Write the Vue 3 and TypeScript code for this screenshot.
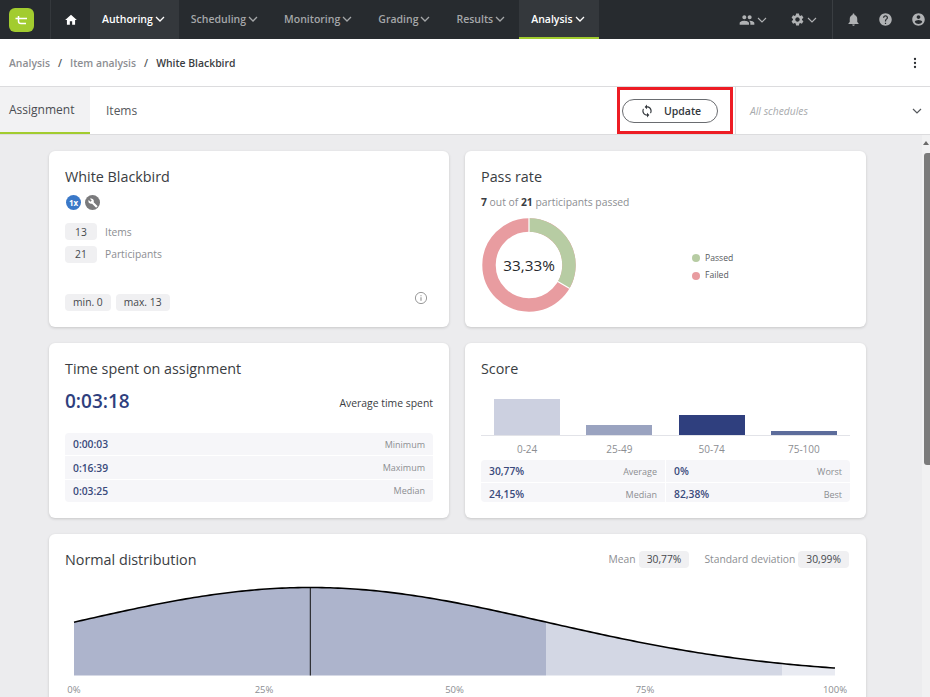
<template>
  <div class="page">
    <header class="topbar">
      <div class="logo-cell">
        <svg class="logo" width="25" height="24" viewBox="0 0 25 24">
          <rect width="25" height="24" rx="6" fill="#a2cc2f" />
          <path d="M9.5 8v5.2c0 1.6 1 2.3 2.5 2.3h5M6.5 10.5H18" fill="none" stroke="#fff" stroke-width="1.5" />
        </svg>
      </div>
      <a class="home-cell">
        <svg width="14" height="14" viewBox="0 0 24 24"><path fill="#fff" :d="icons.home" /></svg>
      </a>
      <a
        v-for="item in navItems"
        :key="item.label"
        class="nav-item"
        :class="{ 'nav-item--open': item.open, 'nav-item--active': item.active }"
      >
        {{ item.label }}
        <svg class="chev" width="10" height="6" viewBox="0 0 10 6"><path d="M1 1l4 4 4-4" fill="none" stroke="currentColor" stroke-width="1.3" /></svg>
      </a>
      <div class="nav-tools">
        <a class="tool">
          <svg width="16" height="16" viewBox="0 0 24 24"><path fill="currentColor" :d="icons.people" /></svg>
          <svg class="chev" width="10" height="6" viewBox="0 0 10 6"><path d="M1 1l4 4 4-4" fill="none" stroke="currentColor" stroke-width="1.1" /></svg>
        </a>
        <a class="tool tool--last">
          <svg width="15" height="15" viewBox="0 0 24 24"><path fill="currentColor" :d="icons.gear" /></svg>
          <svg class="chev" width="10" height="6" viewBox="0 0 10 6"><path d="M1 1l4 4 4-4" fill="none" stroke="currentColor" stroke-width="1.1" /></svg>
        </a>
        <div class="user-tools">
          <svg width="15" height="15" viewBox="0 0 24 24"><path fill="currentColor" :d="icons.bell" /></svg>
          <svg width="15" height="15" viewBox="0 0 24 24"><path fill="currentColor" :d="icons.help" /></svg>
          <svg width="15" height="15" viewBox="0 0 24 24"><path fill="currentColor" :d="icons.account" /></svg>
        </div>
      </div>
    </header>

    <div class="crumbs">
      <span class="crumb">Analysis</span>
      <span class="sep">/</span>
      <span class="crumb">Item analysis</span>
      <span class="sep">/</span>
      <span class="crumb crumb--current">White Blackbird</span>
      <svg class="more" width="4" height="12" viewBox="0 0 4 12">
        <circle cx="2" cy="2" r="1.15" /><circle cx="2" cy="6" r="1.15" /><circle cx="2" cy="10" r="1.15" />
      </svg>
    </div>

    <div class="tabs">
      <a class="tab tab--active">Assignment</a>
      <a class="tab">Items</a>
      <div class="marked">
        <button class="update-btn">
          <svg width="14" height="14" viewBox="0 0 24 24"><path fill="#33373c" :d="icons.sync" /></svg>
          <span>Update</span>
        </button>
      </div>
      <div class="schedules">
        <span>All schedules</span>
        <svg width="10" height="6" viewBox="0 0 10 6"><path d="M1 1l4 4 4-4" fill="none" stroke="#55585c" stroke-width="1.2" /></svg>
      </div>
    </div>

    <div class="body">
      <main class="content">
        <div class="grid">
          <section class="card">
            <h2>White Blackbird</h2>
            <div class="badges">
              <span class="badge badge--blue">1x</span>
              <span class="badge badge--grey">
                <svg width="10" height="10" viewBox="0 0 24 24"><path fill="#fff" :d="icons.wrench" /></svg>
              </span>
            </div>
            <div class="count-row"><span class="pill pill--count">13</span><span class="muted">Items</span></div>
            <div class="count-row"><span class="pill pill--count">21</span><span class="muted">Participants</span></div>
            <div class="limits">
              <span class="pill">min. 0</span>
              <span class="pill">max. 13</span>
              <svg class="info" width="14" height="14" viewBox="0 0 14 14">
                <circle cx="7" cy="7" r="5.6" fill="none" stroke="#9a9a9a" stroke-width="1" />
                <path d="M7 6.3v3.4M7 4.2v1.1" stroke="#9a9a9a" stroke-width="1.2" />
              </svg>
            </div>
          </section>

          <section class="card">
            <h2>Pass rate</h2>
            <p class="muted pass-line"><b>7</b> out of <b>21</b> participants passed</p>
            <div class="pass-body">
              <div class="donut">
                <svg width="94" height="94" viewBox="0 0 94 94">
                  <circle cx="47" cy="47" r="40" fill="none" stroke="#e89ca0" stroke-width="13.4" />
                  <path d="M47 7A40 40 0 0 1 81.64 67" fill="none" stroke="#b7cca3" stroke-width="13.4" />
                  <path d="M47 0V14M75.3 63.3L87.7 70.5" stroke="#fff" stroke-width="1.2" />
                </svg>
                <span class="donut-label">33,33%</span>
              </div>
              <ul class="legend">
                <li><i class="dot dot--green"></i>Passed</li>
                <li><i class="dot dot--red"></i>Failed</li>
              </ul>
            </div>
          </section>

          <section class="card">
            <h2>Time spent on assignment</h2>
            <div class="time-head">
              <span class="time-big">0:03:18</span>
              <span class="time-note">Average time spent</span>
            </div>
            <div class="stat-list">
              <div v-for="row in timeRows" :key="row.label" class="stat-row">
                <strong>{{ row.value }}</strong><span>{{ row.label }}</span>
              </div>
            </div>
          </section>

          <section class="card">
            <h2>Score</h2>
            <div class="bars">
              <div v-for="bar in scoreBars" :key="bar.label" class="bar-col">
                <div class="bar" :style="{ height: bar.height + 'px', background: bar.color }"></div>
              </div>
            </div>
            <div class="bar-labels">
              <span v-for="bar in scoreBars" :key="bar.label">{{ bar.label }}</span>
            </div>
            <div class="score-stats">
              <div v-for="row in scoreRows" :key="row.label" class="stat-row">
                <strong>{{ row.value }}</strong><span>{{ row.label }}</span>
              </div>
            </div>
          </section>

          <section class="card card--wide">
            <div class="dist-head">
              <h2>Normal distribution</h2>
              <div class="dist-meta">
                <span class="muted">Mean</span><span class="pill">30,77%</span>
                <span class="muted dist-gap">Standard deviation</span><span class="pill">30,99%</span>
              </div>
            </div>
            <svg class="curve" width="817" height="120" viewBox="49 580 817 120">
              <path :d="areaPath(74, 546)" fill="#adb4cc" />
              <path :d="areaPath(546, 782)" fill="#d3d7e4" />
              <path :d="areaPath(782, 835)" fill="#e9ebf2" />
              <path :d="linePath" fill="none" stroke="#000" stroke-width="1.6" />
              <path d="M310.3 588V675.5" stroke="#111" stroke-width="1" />
              <text v-for="tick in ticks" :key="tick.label" :x="tick.x" y="693" text-anchor="middle">{{ tick.label }}</text>
            </svg>
          </section>
        </div>
      </main>
      <div class="scrollbar">
        <svg width="8" height="6" viewBox="0 0 8 6"><path d="M4 1l3 4H1z" fill="#6a6a6a" /></svg>
        <div class="thumb"></div>
      </div>
    </div>
  </div>
</template>

<script setup lang="ts">
const icons = {
  home: 'M10 20v-6h4v6h5v-8h3L12 3 2 12h3v8z',
  people:
    'M16 11c1.66 0 2.99-1.34 2.99-3S17.66 5 16 5c-1.66 0-3 1.34-3 3s1.34 3 3 3zm-8 0c1.66 0 2.99-1.34 2.99-3S9.66 5 8 5C6.34 5 5 6.34 5 8s1.34 3 3 3zm0 2c-2.33 0-7 1.17-7 3.5V19h14v-2.5c0-2.33-4.67-3.5-7-3.5zm8 0c-.29 0-.62.02-.97.05 1.16.84 1.97 1.97 1.97 3.45V19h6v-2.5c0-2.33-4.67-3.5-7-3.5z',
  gear:
    'M19.14 12.94c.04-.3.06-.61.06-.94 0-.32-.02-.64-.07-.94l2.03-1.58c.18-.14.23-.41.12-.61l-1.92-3.32c-.12-.22-.37-.29-.59-.22l-2.39.96c-.5-.38-1.03-.7-1.62-.94l-.36-2.54c-.04-.24-.24-.41-.48-.41h-3.84c-.24 0-.43.17-.47.41l-.36 2.54c-.59.24-1.13.57-1.62.94l-2.39-.96c-.22-.08-.47 0-.59.22L2.74 8.87c-.12.21-.08.47.12.61l2.03 1.58c-.05.3-.09.63-.09.94s.02.64.07.94l-2.03 1.58c-.18.14-.23.41-.12.61l1.92 3.32c.12.22.37.29.59.22l2.39-.96c.5.38 1.03.7 1.62.94l.36 2.54c.05.24.24.41.48.41h3.84c.24 0 .44-.17.47-.41l.36-2.54c.59-.24 1.13-.56 1.62-.94l2.39.96c.22.08.47 0 .59-.22l1.92-3.32c.12-.22.07-.47-.12-.61l-2.01-1.58zM12 15.6c-1.98 0-3.6-1.62-3.6-3.6s1.62-3.6 3.6-3.6 3.6 1.62 3.6 3.6-1.62 3.6-3.6 3.6z',
  bell: 'M12 22c1.1 0 2-.9 2-2h-4c0 1.1.89 2 2 2zm6-6v-5c0-3.07-1.64-5.64-4.5-6.32V4c0-.83-.67-1.5-1.5-1.5s-1.5.67-1.5 1.5v.68C7.63 5.36 6 7.92 6 11v5l-2 2v1h16v-1l-2-2z',
  help: 'M12 2C6.48 2 2 6.48 2 12s4.48 10 10 10 10-4.48 10-10S17.52 2 12 2zm1 17h-2v-2h2v2zm2.07-7.75l-.9.92C13.45 12.9 13 13.5 13 15h-2v-.5c0-1.1.45-2.1 1.17-2.83l1.24-1.26c.37-.36.59-.86.59-1.41 0-1.1-.9-2-2-2s-2 .9-2 2H8c0-2.21 1.79-4 4-4s4 1.79 4 4c0 .88-.36 1.68-.93 2.25z',
  account:
    'M12 2C6.48 2 2 6.48 2 12s4.48 10 10 10 10-4.48 10-10S17.52 2 12 2zm0 3c1.66 0 3 1.34 3 3s-1.34 3-3 3-3-1.34-3-3 1.34-3 3-3zm0 14.2c-2.5 0-4.71-1.28-6-3.22.03-1.99 4-3.08 6-3.08 1.99 0 5.97 1.09 6 3.08-1.29 1.94-3.5 3.22-6 3.22z',
  sync: 'M12 4V1L8 5l4 4V6c3.31 0 6 2.69 6 6 0 1.01-.25 1.97-.7 2.8l1.46 1.46C19.54 15.03 20 13.57 20 12c0-4.42-3.58-8-8-8zm0 14c-3.31 0-6-2.69-6-6 0-1.01.25-1.97.7-2.8L5.24 7.74C4.46 8.97 4 10.43 4 12c0 4.42 3.58 8 8 8v3l4-4-4-4v3z',
  wrench:
    'M22.7 19l-9.1-9.1c.9-2.3.4-5-1.5-6.9-2-2-5-2.4-7.4-1.3L9 6 6 9 1.6 4.7C.4 7.1.9 10.1 2.9 12.1c1.9 1.9 4.6 2.4 6.9 1.5l9.1 9.1c.4.4 1 .4 1.4 0l2.3-2.3c.5-.4.5-1.1.1-1.4z',
}

const navItems = [
  { label: 'Authoring', open: true },
  { label: 'Scheduling' },
  { label: 'Monitoring' },
  { label: 'Grading' },
  { label: 'Results' },
  { label: 'Analysis', active: true },
]

const timeRows = [
  { value: '0:00:03', label: 'Minimum' },
  { value: '0:16:39', label: 'Maximum' },
  { value: '0:03:25', label: 'Median' },
]

const scoreBars = [
  { label: '0-24', height: 36, color: '#ccd0e0' },
  { label: '25-49', height: 10, color: '#9aa3c0' },
  { label: '50-74', height: 20, color: '#2f3f7e' },
  { label: '75-100', height: 4, color: '#5c6c9b' },
]

const scoreRows = [
  { value: '30,77%', label: 'Average' },
  { value: '0%', label: 'Worst' },
  { value: '24,15%', label: 'Median' },
  { value: '82,38%', label: 'Best' },
]

const ticks = [
  { label: '0%', x: 74 },
  { label: '25%', x: 264 },
  { label: '50%', x: 454.5 },
  { label: '75%', x: 645 },
  { label: '100%', x: 835 },
]

// gaussian over the plot, coordinates are page pixels (viewBox starts at 49,580)
const baseline = 675.5
const curveY = (x: number) => baseline - 88 * Math.exp(-((x - 310.3) ** 2) / (2 * 236 ** 2))

const curvePoints = (from: number, to: number) => {
  const points: string[] = []
  for (let x = from; x < to; x += 4) points.push(`${x} ${curveY(x).toFixed(2)}`)
  points.push(`${to} ${curveY(to).toFixed(2)}`)
  return points
}

const areaPath = (from: number, to: number) =>
  `M${from} ${baseline}L${curvePoints(from, to).join('L')}L${to} ${baseline}Z`

const linePath = `M${curvePoints(74, 835).join('L')}`
</script>

<style>
html,
body {
  margin: 0;
  overflow: hidden;
}
</style>

<style scoped>
.page {
  width: 930px;
  height: 697px;
  display: flex;
  flex-direction: column;
  overflow: hidden;
  font-family: 'Open Sans', 'Liberation Sans', sans-serif;
  color: #3a3d42;
  background: #fff;
}

.topbar {
  flex: 0 0 39px;
  display: flex;
  align-items: stretch;
  background: #272b2f;
  color: #a5a7a9;
  font-size: 10.5px;
  font-weight: 600;
}

.logo-cell {
  width: 51px;
  display: flex;
  align-items: center;
  padding-left: 9px;
  box-sizing: border-box;
  border-right: 1px solid #34383c;
}

.home-cell {
  width: 39px;
  display: flex;
  align-items: center;
  justify-content: center;
}

.nav-item {
  display: flex;
  align-items: center;
  gap: 2px;
  padding: 0 14px 0 12px;
  border-bottom: 2px solid transparent;
}

.nav-item--open {
  background: #34383c;
  color: #fff;
}

.nav-item--active {
  background: #34383c;
  color: #fff;
  border-bottom-color: #a2cc2f;
}

.nav-tools {
  margin-left: auto;
  display: flex;
  align-items: center;
  color: #b0b2b4;
}

.tool {
  display: flex;
  align-items: center;
  gap: 2px;
  margin-right: 23px;
}

.tool--last {
  margin-right: 0;
}

.user-tools {
  height: 100%;
  display: flex;
  align-items: center;
  gap: 17.5px;
  margin-left: 15px;
  padding: 0 4.5px 0 13px;
  border-left: 1px solid #3a3e42;
}

.crumbs {
  flex: 0 0 47px;
  display: flex;
  align-items: center;
  padding: 0 13px 0 9px;
  font-size: 10.4px;
  font-weight: 600;
  color: #8c8e92;
  border-bottom: 1px solid #dcdcde;
}

.sep {
  margin: 0 8px;
  color: #55585c;
}

.crumb--current {
  color: #3a3d42;
}

.more {
  margin-left: auto;
  fill: #2a2d31;
}

.tabs {
  flex: 0 0 47px;
  display: flex;
  align-items: stretch;
  font-size: 12px;
  border-bottom: 1px solid #dcdcde;
}

.tab {
  display: flex;
  align-items: center;
  padding: 0 16px;
  color: #55585c;
}

.tab--active {
  width: 90px;
  box-sizing: border-box;
  padding: 0 9px;
  background: #f2f2f3;
  color: #4a4d52;
  border-bottom: 2px solid #a2cc2f;
}

.marked {
  margin-left: auto;
  width: 116px;
  box-sizing: border-box;
  display: flex;
  align-items: center;
  padding-left: 2px;
  margin-right: 2px;
  border: 3px solid #ed1c24;
}

.update-btn {
  width: 96px;
  height: 24px;
  padding: 0 0 0 17px;
  display: flex;
  align-items: center;
  gap: 10px;
  background: #fff;
  border: 1px solid #6a6c70;
  border-radius: 12px;
  font-family: inherit;
  font-size: 10.5px;
  font-weight: 600;
  color: #33373c;
}

.schedules {
  width: 195px;
  box-sizing: border-box;
  display: flex;
  align-items: center;
  justify-content: space-between;
  padding: 0 8px 0 14px;
  border-left: 1px solid #dcdcde;
  font-size: 10.3px;
  font-style: italic;
  color: #a8aaad;
}

.body {
  flex: 1;
  min-height: 0;
  display: flex;
  background: #ececee;
}

.content {
  flex: 1;
  min-width: 0;
  overflow: hidden;
  padding: 16px 56px 0 49px;
}

.grid {
  display: grid;
  grid-template-columns: 400px 401px;
  grid-auto-rows: 175.5px;
  gap: 16px;
}

.card {
  box-sizing: border-box;
  padding: 16px;
  display: flex;
  flex-direction: column;
  background: #fff;
  border-radius: 6px;
  box-shadow: 0 1px 3px rgba(0, 0, 0, 0.16);
  min-width: 0;
}

.card--wide {
  grid-column: 1 / -1;
  height: 200px;
}

h2 {
  margin: 0;
  font-size: 14.35px;
  line-height: 20px;
  font-weight: 400;
  color: #3a3d42;
}

.muted {
  color: #8c8e92;
}

.pill {
  display: inline-flex;
  align-items: center;
  justify-content: center;
  height: 17px;
  padding: 0 8px;
  border-radius: 4px;
  background: #f0f0f2;
  font-size: 10.3px;
  color: #45484c;
}

.badges {
  display: flex;
  gap: 4px;
  margin: 8px 0 13px 1px;
}

.badge {
  width: 15px;
  height: 15px;
  border-radius: 50%;
  display: flex;
  align-items: center;
  justify-content: center;
  color: #fff;
  font-size: 8px;
  font-weight: 700;
}

.badge--blue {
  background: #3a78c8;
}

.badge--grey {
  background: #7a7a7c;
}

.count-row {
  display: flex;
  align-items: center;
  gap: 8px;
  font-size: 10.3px;
  margin-bottom: 5.5px;
}

.pill--count {
  width: 32px;
  padding: 0;
}

.limits {
  margin-top: auto;
  display: flex;
  align-items: center;
  gap: 5px;
}

.info {
  margin: -8px 5px 0 auto;
}

.pass-line {
  margin: 8px 0 0;
  font-size: 10.35px;
  line-height: 14px;
}

.pass-line b {
  font-weight: 700;
  color: #3a3d42;
}

.pass-body {
  display: flex;
  align-items: center;
  margin: 9px 0 0 1px;
}

.donut {
  position: relative;
  width: 94px;
  height: 94px;
}

.donut svg {
  display: block;
}

.donut-label {
  position: absolute;
  inset: 0;
  display: flex;
  align-items: center;
  justify-content: center;
  font-size: 15.3px;
  color: #26292d;
}

.legend {
  list-style: none;
  margin: 4px 0 0 116px;
  padding: 0;
  font-size: 8.6px;
  line-height: 17.5px;
  color: #55585c;
}

.legend li {
  display: flex;
  align-items: center;
  gap: 5px;
}

.dot {
  width: 8px;
  height: 8px;
  border-radius: 50%;
}

.dot--green {
  background: #b7cca3;
}

.dot--red {
  background: #e89ca0;
}

.time-head {
  display: flex;
  align-items: flex-end;
  justify-content: space-between;
  margin-top: 8px;
}

.time-big {
  font-size: 19px;
  line-height: 28px;
  font-weight: 600;
  color: #2f3f7e;
}

.time-note {
  font-size: 10.4px;
  line-height: 20px;
  margin-bottom: 2px;
  color: #3a3d42;
}

.stat-list {
  margin-top: auto;
  display: flex;
  flex-direction: column;
  gap: 1px;
  border-radius: 4px;
  overflow: hidden;
}

.stat-row {
  height: 22.3px;
  display: flex;
  align-items: center;
  justify-content: space-between;
  padding: 0 8px;
  background: #f6f6f9;
  font-size: 9px;
  color: #8c8e92;
}

.stat-row strong {
  font-size: 10.3px;
  font-weight: 600;
  color: #3a4a7c;
}

.bars {
  display: flex;
  align-items: flex-end;
  height: 36px;
  margin-top: 20.5px;
  border-bottom: 1px solid #e2e3e8;
}

.bar-col {
  flex: 1;
  display: flex;
  justify-content: center;
}

.bar {
  width: 66px;
}

.bar-labels {
  display: flex;
  margin-top: 6px;
  font-size: 10px;
  line-height: 14px;
  color: #8c8e92;
}

.bar-labels span {
  flex: 1;
  text-align: center;
}

.score-stats {
  display: grid;
  grid-template-columns: 1fr 1fr;
  gap: 1px;
  margin-top: 4px;
  border-radius: 4px;
  overflow: hidden;
}

.dist-head {
  display: flex;
  align-items: center;
  justify-content: space-between;
}

.dist-meta {
  display: flex;
  align-items: center;
  gap: 3px;
  padding-right: 1px;
  font-size: 10.3px;
  margin-top: -2px;
}

.dist-gap {
  margin-left: 12px;
}

.curve {
  display: block;
  flex: none;
  margin: 10px -16px 0;
}

.curve text {
  font-size: 9.5px;
  fill: #8c8e92;
  font-family: inherit;
}

.scrollbar {
  flex: 0 0 8px;
  display: flex;
  flex-direction: column;
  align-items: center;
  padding-top: 5px;
  box-sizing: border-box;
  background: #f1f1f2;
}

.scrollbar svg {
  flex: none;
}

.thumb {
  width: 6px;
  height: 312px;
  margin: 7px 0 0 2px;
  background: #7b7b7b;
  border-radius: 3px 0 0 3px;
}
</style>
